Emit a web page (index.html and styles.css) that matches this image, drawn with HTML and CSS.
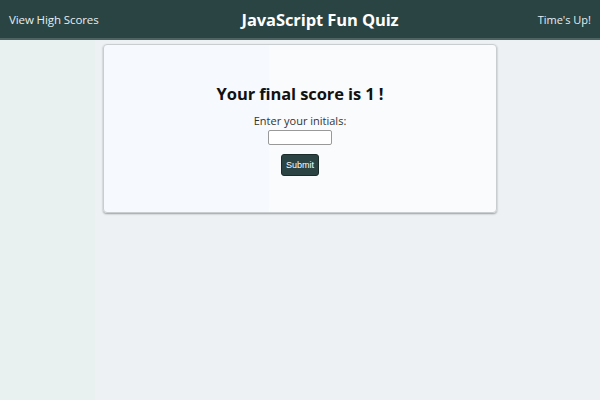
FILE: index.html
```html
<!DOCTYPE html>
<html>
<head>
<meta charset="utf-8">
<link rel="stylesheet" href="styles.css">
</head>
<body>
<header class="topbar">
  <a class="link">View High Scores</a>
  <h1 class="title">JavaScript Fun Quiz</h1>
  <span class="timer">Time's Up!</span>
</header>
<main class="page">
  <section class="card">
    <h2 class="score">Your final score is 1 !</h2>
    <label class="label" for="ini">Enter your initials:</label>
    <input class="field" id="ini" type="text">
    <button class="submit">Submit</button>
  </section>
</main>
</body>
</html>
```
FILE: styles.css
```css
html, body { margin: 0; padding: 0; }
body {
  width: 600px;
  height: 400px;
  background: linear-gradient(to right, #e9f1f0 0 95px, #edf1f4 95px);
  font-family: "Open Sans", "DejaVu Sans", sans-serif;
  overflow: hidden;
}
.topbar {
  height: 38px;
  background: #2a4443;
  border-bottom: 2px solid #4d6462;
  display: flex;
  align-items: center;
  justify-content: space-between;
  padding: 0 9px 0 9px;
  color: #fff;
}
.link { font-size: 11.5px; font-weight: 400; color: #e8eeee; letter-spacing: -0.1px; }
.title {
  margin: 0;
  font-size: 16.5px;
  font-weight: 700;
  letter-spacing: -0.1px;
  padding-left: 4px;
}
.timer { font-size: 11px; color: #e8eeee; }
.page {
  display: flex;
  justify-content: center;
  padding-top: 4px;
}
.card {
  width: 392px;
  height: 167px;
  background: linear-gradient(to right, #f6f9fd 0 165px, #fafbfd 165px);
  border: 1px solid #c9cdd0;
  border-radius: 4px;
  box-shadow: 0 1px 2px rgba(0,0,0,0.35);
  display: flex;
  flex-direction: column;
  align-items: center;
  box-sizing: content-box;
}
.score {
  margin: 38px 0 0 0;
  font-size: 16.5px;
  font-weight: 700;
  color: #111;
  line-height: 22px;
  letter-spacing: -0.1px;
}
.label {
  margin-top: 8px;
  font-size: 11px;
  color: #333;
  line-height: 15px;
}
.field {
  margin-top: 2px;
  width: 60px;
  height: 11px;
  padding: 1px;
  border: 1px solid #999;
  border-radius: 2px;
  background: #fff;
}
.submit {
  margin-top: 9px;
  width: 38px;
  height: 22px;
  padding: 0;
  background: #2b4443;
  color: #fff;
  border: 1px solid #1b2b2a;
  border-radius: 3px;
  font-family: "Liberation Sans", Arial, sans-serif;
  font-size: 9px;
}
```
